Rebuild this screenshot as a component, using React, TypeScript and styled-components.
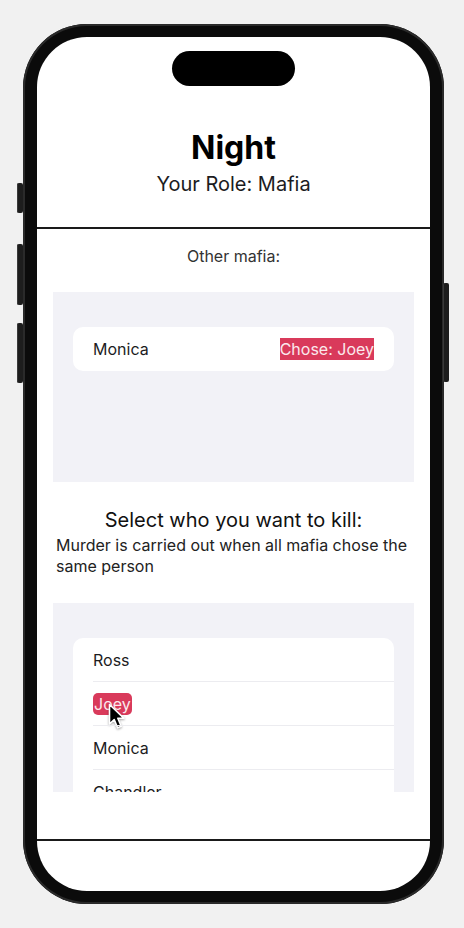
import React from "react";
import styled, { createGlobalStyle } from "styled-components";

const Global = createGlobalStyle`
  html, body { margin: 0; padding: 0; background: #f1f1f1; }
  body { font-family: Inter, "Noto Sans", "Liberation Sans", sans-serif; }
  * { box-sizing: border-box; }
`;

const Stage = styled.div`
  width: 464px;
  height: 928px;
  padding: 24px 0 0 23px;
  background: #f1f1f1;
`;

const Phone = styled.div`
  position: relative;
  width: 421px;
  height: 880px;
  padding: 13px 14px 13px 14px;
  border-radius: 64px;
  background: #0b0b0b;
  box-shadow: inset 0 0 0 2px #2a2a2a;
`;

const SideButton = styled.div<{ $side: "left" | "right"; $top: number; $h: number }>`
  position: absolute;
  top: ${(p) => p.$top}px;
  ${(p) => (p.$side === "left" ? "left: -6px;" : "right: -5px;")}
  width: 6px;
  height: ${(p) => p.$h}px;
  background: #1d1d1d;
  border-radius: 2px;
  box-shadow: inset 1px 0 0 #3a3a3a;
`;

const Screen = styled.div`
  width: 393px;
  height: 854px;
  border-radius: 50px;
  background: #ffffff;
  overflow: hidden;
  display: flex;
  flex-direction: column;
  color: #1c1c1e;
`;

const IslandRow = styled.div`
  display: flex;
  justify-content: center;
  padding-top: 14px;
`;

const Island = styled.div`
  width: 123px;
  height: 35px;
  border-radius: 18px;
  background: #000;
`;

const Header = styled.header`
  display: flex;
  flex-direction: column;
  align-items: center;
  padding: 43px 0 31px;
  border-bottom: 2px solid #1a1a1a;
`;

const Title = styled.h1`
  margin: 0;
  font-size: 32px;
  line-height: 38px;
  font-weight: 700;
  color: #000;
`;

const Role = styled.div`
  margin-top: 5px;
  font-size: 20px;
  line-height: 24px;
  color: #1c1c1e;
`;

const Body = styled.main`
  flex: 1;
  display: flex;
  flex-direction: column;
  align-items: stretch;
  min-height: 0;
`;

const SmallLabel = styled.div`
  margin-top: 17px;
  text-align: center;
  font-size: 16px;
  line-height: 20px;
  color: #333;
`;

const Panel = styled.section<{ $top: number; $h: number }>`
  margin: ${(p) => p.$top}px 16px 0;
  height: ${(p) => p.$h}px;
  padding: 35px 20px 0;
  background: #f2f2f7;
  overflow: hidden;
`;

const Card = styled.div`
  background: #fff;
  border-radius: 10px;
  overflow: hidden;
`;

const Row = styled.div<{ $divider?: boolean }>`
  position: relative;
  height: 44px;
  display: flex;
  align-items: center;
  justify-content: space-between;
  padding: 0 20px;
  font-size: 16px;
  color: #1c1c1e;
  &::after {
    content: "";
    display: ${(p) => (p.$divider ? "block" : "none")};
    position: absolute;
    left: 20px;
    right: 0;
    bottom: 0;
    height: 1px;
    background: #ececf0;
  }
`;

const Selected = styled.span<{ $rounded?: boolean }>`
  display: inline-block;
  background: #d93a5b;
  color: #fbe9ed;
  line-height: 22px;
  padding: 0 ${(p) => (p.$rounded ? "1px" : "0")};
  border-radius: ${(p) => (p.$rounded ? "5px" : "0")};
`;

const Heading = styled.h2`
  margin: 26px 0 0;
  text-align: center;
  font-size: 20px;
  line-height: 24px;
  font-weight: 400;
  color: #111;
`;

const Note = styled.p`
  margin: 3px 19px 0;
  font-size: 16px;
  line-height: 21px;
  color: #222;
`;

const Footer = styled.footer`
  height: 52px;
  border-top: 2px solid #1a1a1a;
  flex-shrink: 0;
`;

const Joey = styled.span`
  position: relative;
`;

const Cursor = styled.svg`
  position: absolute;
  left: 15px;
  top: 10px;
  width: 18px;
  height: 27px;
  pointer-events: none;
  filter: drop-shadow(0 1px 1px rgba(0, 0, 0, 0.35));
`;

export default function App() {
  const players = ["Ross", "Joey", "Monica", "Chandler"];
  return (
    <Stage>
      <Global />
      <Phone>
        <SideButton $side="left" $top={159} $h={30} />
        <SideButton $side="left" $top={220} $h={61} />
        <SideButton $side="left" $top={299} $h={60} />
        <SideButton $side="right" $top={259} $h={99} />
        <Screen>
          <IslandRow>
            <Island />
          </IslandRow>
          <Header>
            <Title>Night</Title>
            <Role>Your Role: Mafia</Role>
          </Header>
          <Body>
            <SmallLabel>Other mafia:</SmallLabel>
            <Panel $top={26} $h={190}>
              <Card>
                <Row>
                  <span>Monica</span>
                  <Selected>Chose: Joey</Selected>
                </Row>
              </Card>
            </Panel>
            <Heading>Select who you want to kill:</Heading>
            <Note>Murder is carried out when all mafia chose the same person</Note>
            <Panel $top={26} $h={189}>
              <Card>
                {players.map((p, i) => (
                  <Row key={p} $divider={i < players.length - 1}>
                    {p === "Joey" ? (
                      <Joey>
                        <Selected $rounded>Joey</Selected>
                        <Cursor viewBox="0 0 18 27">
                          <path
                            d="M1.5 1.5 L1.5 21 L6.2 16.6 L9.6 24.8 L13.2 23.3 L9.8 15.3 L16 15.3 Z"
                            fill="#000"
                            stroke="#fff"
                            strokeWidth="1.6"
                            strokeLinejoin="round"
                          />
                        </Cursor>
                      </Joey>
                    ) : (
                      <span>{p}</span>
                    )}
                  </Row>
                ))}
              </Card>
            </Panel>
          </Body>
          <Footer />
        </Screen>
      </Phone>
    </Stage>
  );
}
